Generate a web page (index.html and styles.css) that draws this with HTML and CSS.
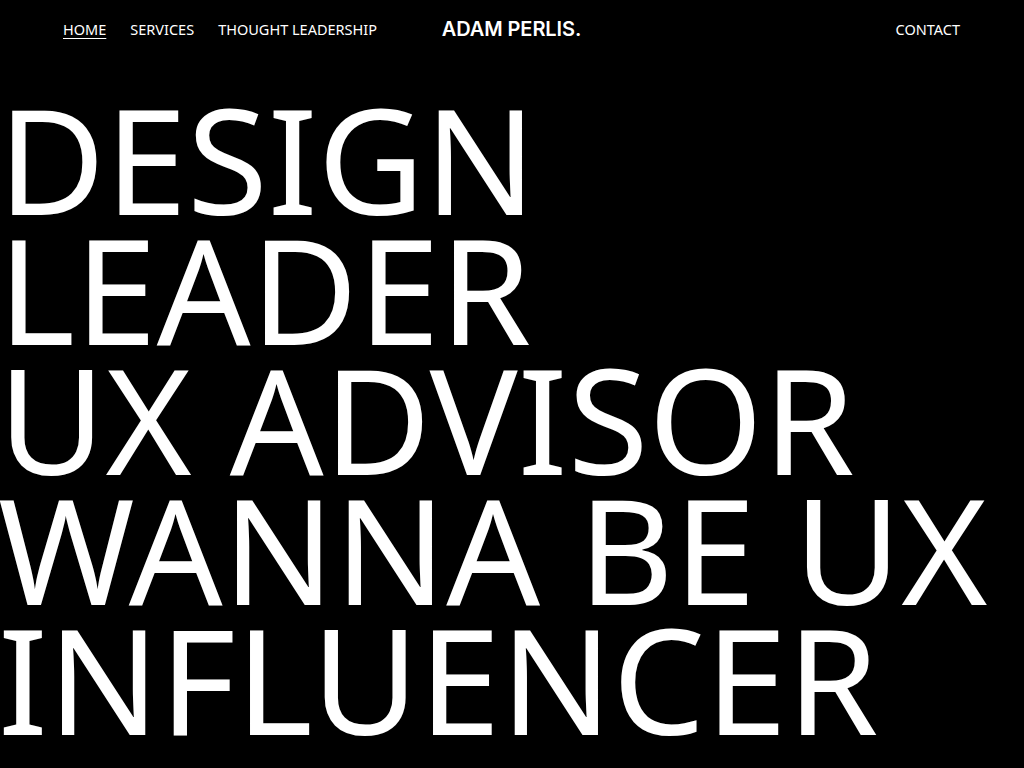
FILE: index.html
```html
<!DOCTYPE html>
<html lang="en">
<head>
<meta charset="utf-8">
<title>Adam Perlis</title>
<link rel="stylesheet" href="styles.css">
</head>
<body>
<header class="site-header">
  <nav class="nav nav-left">
    <a class="nav-link active" href="#">HOME</a>
    <a class="nav-link" href="#">SERVICES</a>
    <a class="nav-link" href="#">THOUGHT LEADERSHIP</a>
  </nav>
  <a class="logo" href="#">ADAM PERLIS.</a>
  <nav class="nav nav-right">
    <a class="nav-link" href="#">CONTACT</a>
  </nav>
</header>
<main>
  <h1 class="hero">DESIGN<br>LEADER<br>UX ADVISOR<br>WANNA BE UX<br>INFLUENCER</h1>
</main>
</body>
</html>
```
FILE: styles.css
```css
html, body {
  margin: 0;
  padding: 0;
  background: #000;
  color: #fff;
  overflow: hidden;
}
body {
  font-family: "Noto Sans", "Open Sans", sans-serif;
}
.site-header {
  display: grid;
  grid-template-columns: 1fr auto 1fr;
  align-items: center;
  height: 58px;
  padding: 0 64px 0 63px;
}
.nav {
  display: flex;
  gap: 24px;
}
.nav-right {
  justify-content: flex-end;
}
.nav-link {
  color: #fff;
  text-decoration: none;
  font-size: 14.5px;
  line-height: 20px;
}
.nav-link.active {
  text-decoration: underline;
  text-underline-offset: 3px;
}
.logo {
  color: #fff;
  text-decoration: none;
  font-family: "Inter", "Roboto", sans-serif;
  font-weight: 600;
  font-size: 20px;
  letter-spacing: -0.1px;
}
.hero {
  margin: 35px 0 0 -2px;
  font-weight: 400;
  font-size: 147px;
  line-height: 130px;
  letter-spacing: 0;
}
```
